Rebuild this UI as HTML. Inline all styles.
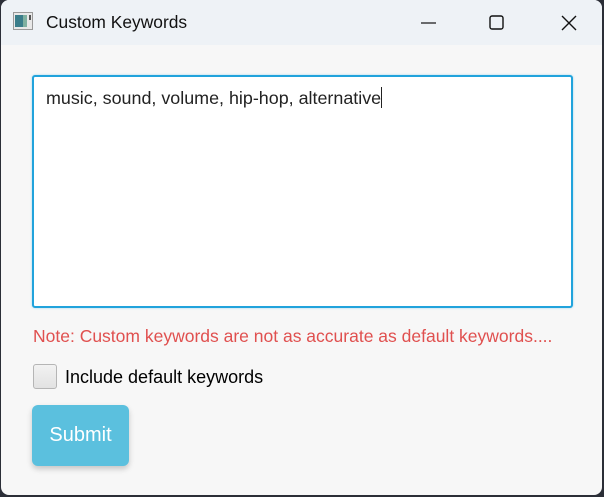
<!DOCTYPE html>
<html><head><style>
*{margin:0;padding:0;box-sizing:border-box}
body{width:604px;height:497px;background:#2b2e37;position:relative;overflow:hidden;font-family:"Liberation Sans",sans-serif}
.win{position:absolute;left:1px;top:0;width:601px;height:495px;background:#f7f7f7;border-radius:8px;overflow:hidden}
.tb{position:absolute;left:0;top:0;width:100%;height:45px;background:#eef2f6}
.title{position:absolute;left:45px;top:12px;font-size:17.4px;color:#111}
.ta{position:absolute;left:31px;top:75px;width:541px;height:233px;background:#fff;border:2px solid #21a3dc;border-radius:3px;box-shadow:0 0 2px #9fd7ee}
.ta span{position:absolute;left:12px;top:10px;font-size:17.9px;color:#222}
.cur{display:inline-block;width:1px;height:21px;background:#222;vertical-align:-4px}
.note{position:absolute;left:32px;top:326px;font-size:17.5px;color:#e0504f}
.cb{position:absolute;left:32px;top:364px;width:24px;height:25px;border:1px solid #b5b5b5;border-radius:3px;background:linear-gradient(#f2f2f2,#e2e2e2)}
.lbl{position:absolute;left:64px;top:367px;font-size:18px;color:#000}
.btn{position:absolute;left:31px;top:405px;width:97px;height:61px;background:#5bc0de;border-radius:6px;box-shadow:0 3px 6px rgba(0,0,0,.2);color:#fff;font-size:20px;text-align:center;line-height:61px}
</style></head><body>
<div class="win">
<div class="tb">
<svg style="position:absolute;left:12px;top:12px" width="20" height="18" viewBox="0 0 20 18"><rect x=".5" y=".5" width="19" height="17" fill="#e8e8e8" stroke="#999"/><rect x="2" y="3" width="8" height="12" fill="#3a7d8a"/><rect x="10" y="3" width="4" height="12" fill="#7fb0a0"/><rect x="16" y="3" width="2" height="5" fill="#555"/></svg>
<div class="title">Custom Keywords</div>
<svg style="position:absolute;left:420px;top:14px" width="160" height="18"><line x1="0" y1="9" x2="15" y2="9" stroke="#111" stroke-width="1.2"/><rect x="69" y="2" width="13" height="13" rx="2" fill="none" stroke="#111" stroke-width="1.4"/><path d="M141 2 L155 16 M155 2 L141 16" stroke="#111" stroke-width="1.4"/></svg>
</div>
<div class="ta"><span>music, sound, volume, hip-hop, alternative<i class="cur"></i></span></div>
<div class="note">Note: Custom keywords are not as accurate as default keywords....</div>
<div class="cb"></div>
<div class="lbl">Include default keywords</div>
<div class="btn">Submit</div>
</div>
</body></html>
